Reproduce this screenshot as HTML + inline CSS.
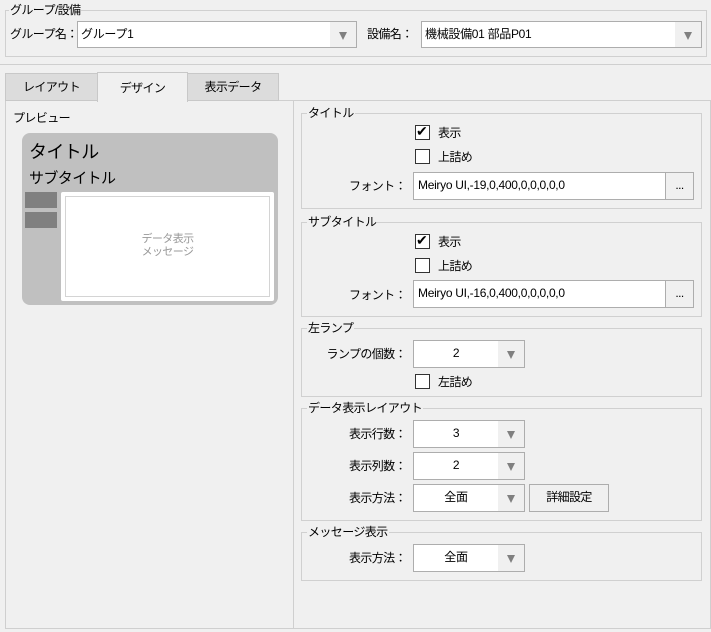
<!DOCTYPE html>
<html><head><meta charset="utf-8"><style>
*{box-sizing:border-box;margin:0;padding:0}
body{width:711px;height:632px;background:#f0f0f0;font-family:"Liberation Sans","Noto Sans CJK JP",sans-serif;font-size:12px;color:#000;position:relative;overflow:hidden;letter-spacing:-0.6px}
.a{position:absolute}
.g{position:absolute;border:1px solid #d0d0d0}
.lg{position:absolute;background:#f0f0f0;padding:0 1px;line-height:14px;top:-8px;left:5px;white-space:nowrap}
.cb{position:absolute;background:#fff;border:1px solid #adadad;line-height:25px;letter-spacing:-0.3px}
.cb .ar{position:absolute;right:0;top:0;bottom:0;width:26px;background:#f0f0f0}
.cb .ar:after{content:"";position:absolute;left:9px;top:10px;border-left:4.5px solid transparent;border-right:4.5px solid transparent;border-top:8px solid #808080}
.chk{position:absolute;width:15px;height:15px;border:1px solid #333;background:#fff}
.lbl{position:absolute;line-height:14px;white-space:nowrap}
.r{text-align:right}
.btn{position:absolute;border:1px solid #adadad;background:#e8e8e8;text-align:center;line-height:25px}
</style></head><body>
<div class="g" style="left:5px;top:10px;width:702px;height:47px"><span class="lg" style="left:3px">グループ/設備</span></div>
<div class="lbl" style="left:10px;top:27px">グループ名：</div>
<div class="cb" style="left:77px;top:21px;width:280px;height:27px;padding-left:3px">グループ1<div class="ar"></div></div>
<div class="lbl" style="left:367px;top:27px">設備名：</div>
<div class="cb" style="left:421px;top:21px;width:281px;height:27px;padding-left:3px">機械設備01 部品P01<div class="ar"></div></div>
<div class="a" style="left:0;top:64px;width:711px;height:1px;background:#cfcfcf"></div>

<div class="a" style="left:5px;top:100px;width:706px;height:529px;border:1px solid #cfcfcf;background:#f0f0f0"></div>
<div class="a" style="left:5px;top:73px;width:93px;height:28px;border:1px solid #c8c8c8;background:#dcdcdc;text-align:center;line-height:26px">レイアウト</div>
<div class="a" style="left:187px;top:73px;width:92px;height:28px;border:1px solid #c8c8c8;background:#dcdcdc;text-align:center;line-height:26px">表示データ</div>
<div class="a" style="left:97px;top:72px;width:91px;height:30px;border:1px solid #c8c8c8;border-bottom:none;background:#f0f0f0;text-align:center;line-height:30px">デザイン</div>
<div class="a" style="left:293px;top:101px;width:1px;height:527px;background:#cfcfcf"></div>

<div class="lbl" style="left:13px;top:111px">プレビュー</div>
<div class="a" style="left:22px;top:133px;width:256px;height:172px;background:#c0c0c0;border-radius:8px"></div>
<div class="lbl" style="left:29px;top:142px;font-size:18px;line-height:20px">タイトル</div>
<div class="lbl" style="left:29px;top:170px;font-size:15px;line-height:18px">サブタイトル</div>
<div class="a" style="left:25px;top:192px;width:32px;height:16px;background:#808080"></div>
<div class="a" style="left:25px;top:212px;width:32px;height:16px;background:#808080"></div>
<div class="a" style="left:61px;top:192px;width:213px;height:109px;background:#fff;border-radius:2px"></div>
<div class="a" style="left:65px;top:196px;width:205px;height:101px;border:1px solid #d4d4d4"></div>
<div class="a" style="left:65px;top:233px;width:205px;text-align:center;color:#999;font-size:11px;line-height:13px">データ表示<br>メッセージ</div>

<div class="g" style="left:301px;top:113px;width:401px;height:96px"><span class="lg">タイトル</span></div>
<div class="chk" style="left:415px;top:125px"></div><div class="lbl" style="left:416px;top:124px;font-size:14px">✔</div>
<div class="lbl" style="left:438px;top:126px">表示</div>
<div class="chk" style="left:415px;top:149px"></div><div class="lbl" style="left:438px;top:150px">上詰め</div>
<div class="lbl r" style="left:330px;width:76px;top:179px">フォント：</div>
<div class="cb" style="left:413px;top:172px;width:253px;height:28px;padding-left:4px">Meiryo UI,-19,0,400,0,0,0,0,0</div>
<div class="btn" style="left:665px;top:172px;width:29px;height:28px;background:#f0f0f0">...</div>

<div class="g" style="left:301px;top:222px;width:401px;height:95px"><span class="lg">サブタイトル</span></div>
<div class="chk" style="left:415px;top:234px"></div><div class="lbl" style="left:416px;top:233px;font-size:14px">✔</div>
<div class="lbl" style="left:438px;top:235px">表示</div>
<div class="chk" style="left:415px;top:258px"></div><div class="lbl" style="left:438px;top:259px">上詰め</div>
<div class="lbl r" style="left:330px;width:76px;top:288px">フォント：</div>
<div class="cb" style="left:413px;top:280px;width:253px;height:28px;padding-left:4px">Meiryo UI,-16,0,400,0,0,0,0,0</div>
<div class="btn" style="left:665px;top:280px;width:29px;height:28px;background:#f0f0f0">...</div>

<div class="g" style="left:301px;top:328px;width:401px;height:69px"><span class="lg">左ランプ</span></div>
<div class="lbl r" style="left:310px;width:96px;top:347px">ランプの個数：</div>
<div class="cb" style="left:413px;top:340px;width:112px;height:28px;padding-right:26px;text-align:center">2<div class="ar"></div></div>
<div class="chk" style="left:415px;top:374px"></div><div class="lbl" style="left:438px;top:375px">左詰め</div>

<div class="g" style="left:301px;top:408px;width:401px;height:113px"><span class="lg">データ表示レイアウト</span></div>
<div class="lbl r" style="left:310px;width:96px;top:427px">表示行数：</div>
<div class="cb" style="left:413px;top:420px;width:112px;height:28px;padding-right:26px;text-align:center">3<div class="ar"></div></div>
<div class="lbl r" style="left:310px;width:96px;top:459px">表示列数：</div>
<div class="cb" style="left:413px;top:452px;width:112px;height:28px;padding-right:26px;text-align:center">2<div class="ar"></div></div>
<div class="lbl r" style="left:310px;width:96px;top:491px">表示方法：</div>
<div class="cb" style="left:413px;top:484px;width:112px;height:28px;padding-right:26px;text-align:center">全面<div class="ar"></div></div>
<div class="btn" style="left:529px;top:484px;width:80px;height:28px;background:#f0f0f0">詳細設定</div>

<div class="g" style="left:301px;top:532px;width:401px;height:49px"><span class="lg">メッセージ表示</span></div>
<div class="lbl r" style="left:310px;width:96px;top:551px">表示方法：</div>
<div class="cb" style="left:413px;top:544px;width:112px;height:28px;padding-right:26px;text-align:center">全面<div class="ar"></div></div>
</body></html>
